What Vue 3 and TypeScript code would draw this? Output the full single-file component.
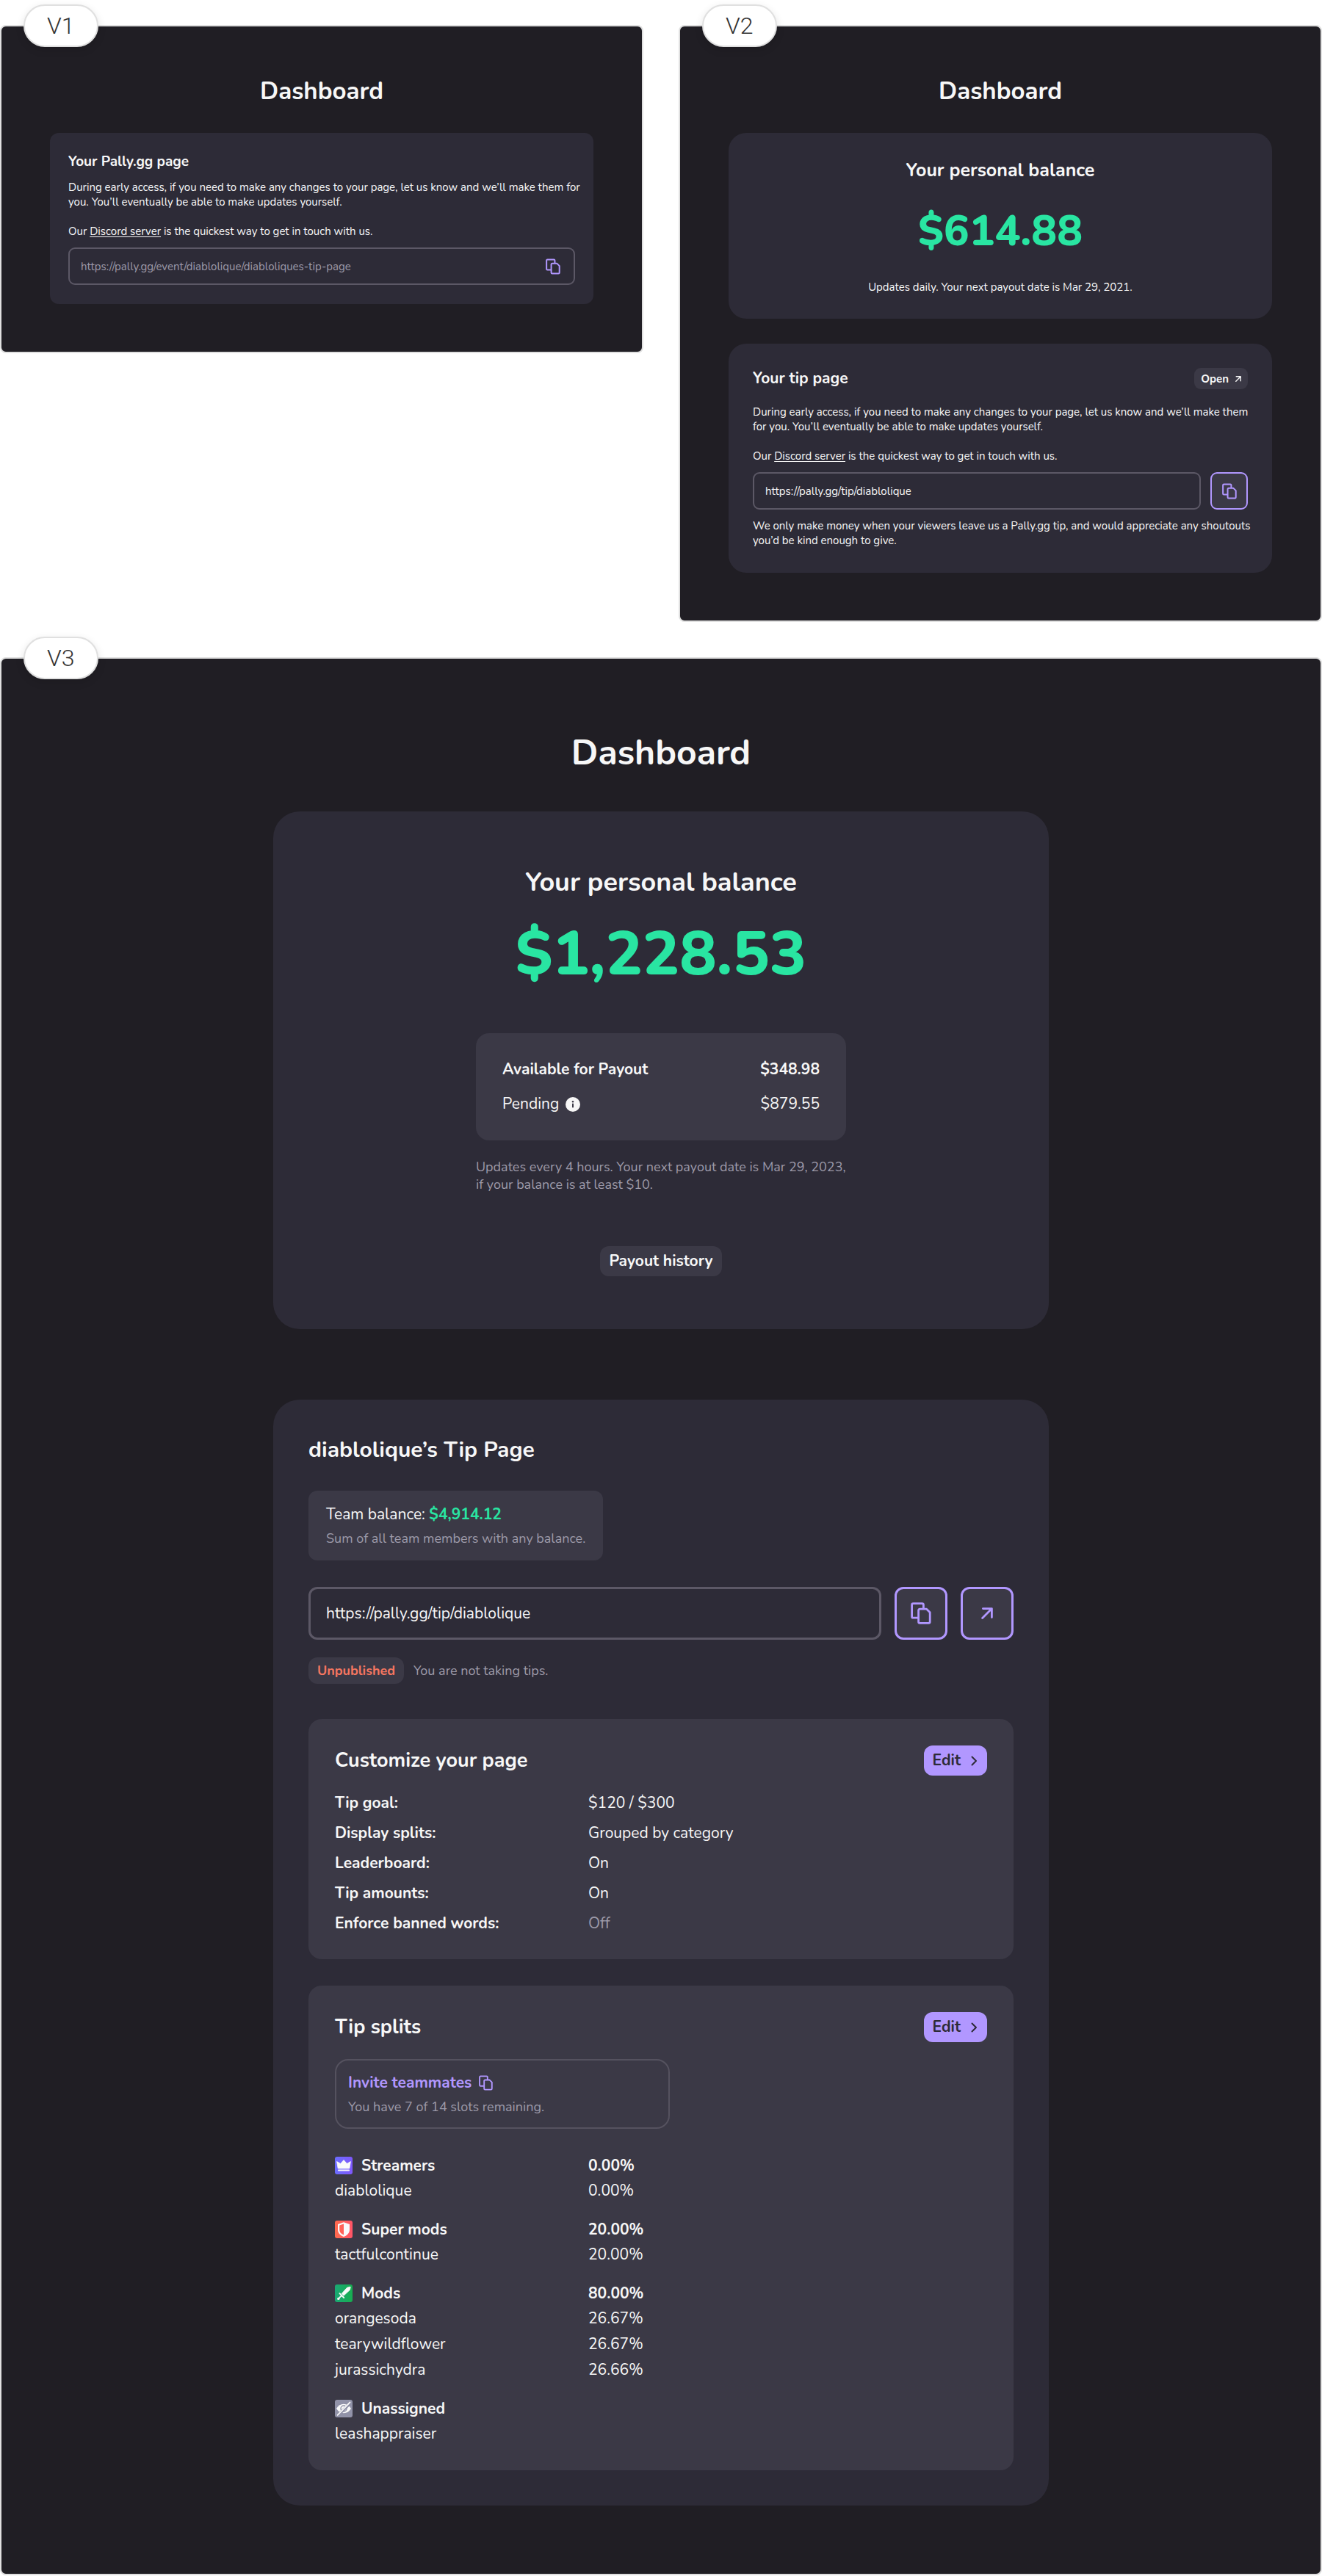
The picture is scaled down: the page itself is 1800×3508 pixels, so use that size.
<script setup lang="ts">
import { h, type FunctionalComponent } from 'vue'

interface Setting {
  label: string
  value: string
  off?: boolean
}

interface Member {
  name: string
  share?: string
}

interface Group {
  id: 'streamers' | 'super' | 'mods' | 'none'
  title: string
  total?: string
  members: Member[]
}

const settings: Setting[] = [
  { label: 'Tip goal:', value: '$120 / $300' },
  { label: 'Display splits:', value: 'Grouped by category' },
  { label: 'Leaderboard:', value: 'On' },
  { label: 'Tip amounts:', value: 'On' },
  { label: 'Enforce banned words:', value: 'Off', off: true },
]

const groups: Group[] = [
  { id: 'streamers', title: 'Streamers', total: '0.00%', members: [{ name: 'diablolique', share: '0.00%' }] },
  { id: 'super', title: 'Super mods', total: '20.00%', members: [{ name: 'tactfulcontinue', share: '20.00%' }] },
  {
    id: 'mods',
    title: 'Mods',
    total: '80.00%',
    members: [
      { name: 'orangesoda', share: '26.67%' },
      { name: 'tearywildflower', share: '26.67%' },
      { name: 'jurassichydra', share: '26.66%' },
    ],
  },
  { id: 'none', title: 'Unassigned', members: [{ name: 'leashappraiser' }] },
]

const tipUrl = 'https://pally.gg/tip/diablolique'
const eventUrl = 'https://pally.gg/event/diablolique/diabloliques-tip-page'

const strokeAttrs = {
  fill: 'none',
  stroke: 'currentColor',
  'stroke-linecap': 'round',
  'stroke-linejoin': 'round',
  'aria-hidden': 'true',
}

const CopyIcon: FunctionalComponent = () =>
  h('svg', { viewBox: '0 0 28 30', ...strokeAttrs, 'stroke-linecap': 'butt', 'stroke-width': 2.8 }, [
    h('path', { d: 'M10 21.2H3.4Q1.6 21.2 1.6 19.4V3.4Q1.6 1.6 3.4 1.6H15.6Q17.4 1.6 17.4 3.4V9' }),
    h('path', { d: 'M10.6 11Q10.6 9.2 12.4 9.2H21.6L26.2 13.8V26.6Q26.2 28.4 24.4 28.4H12.4Q10.6 28.4 10.6 26.6Z' }),
  ])

const ArrowIcon: FunctionalComponent = () =>
  h('svg', { viewBox: '0 0 16 16', ...strokeAttrs, 'stroke-width': 2.8 }, [
    h('path', { d: 'M2.4 1.6H14.4V13.6M14 2L1.6 14.4' }),
  ])

const ChevronIcon: FunctionalComponent = () =>
  h('svg', { viewBox: '0 0 18 18', ...strokeAttrs, 'stroke-width': 2 }, [
    h('path', { d: 'M6.5 3.5L12 9L6.5 14.5' }),
  ])
</script>

<template>
  <main class="board">
    <div class="row">
      <section class="panel" aria-label="V1">
        <span class="badge">V1</span>
        <h1>Dashboard</h1>
        <div class="card card-a">
          <h2>Your Pally.gg page</h2>
          <p class="copy">
            During early access, if you need to make any changes to your page, let us know and we’ll make them for<br />
            you. You’ll eventually be able to make updates yourself.<br /><br />
            Our <a href="#discord">Discord server</a> is the quickest way to get in touch with us.
          </p>
          <div class="field">
            <input type="text" readonly :value="eventUrl" aria-label="Your Pally.gg page" />
            <button type="button" class="bare" aria-label="Copy link"><CopyIcon class="copy-sm" /></button>
          </div>
        </div>
      </section>

      <section class="panel" aria-label="V2">
        <span class="badge">V2</span>
        <h1>Dashboard</h1>
        <div class="card balance-b">
          <h2>Your personal balance</h2>
          <p class="amount">$614.88</p>
          <p class="copy">Updates daily. Your next payout date is Mar 29, 2021.</p>
        </div>
        <div class="card tip-b">
          <header>
            <h2>Your tip page</h2>
            <a class="open" href="#open">Open <ArrowIcon class="arrow-sm" /></a>
          </header>
          <p class="copy">
            During early access, if you need to make any changes to your page, let us know and we’ll make them<br />
            for you. You’ll eventually be able to make updates yourself.<br /><br />
            Our <a href="#discord">Discord server</a> is the quickest way to get in touch with us.
          </p>
          <div class="link-row">
            <div class="field">
              <input type="text" readonly :value="tipUrl" aria-label="Your tip page" />
            </div>
            <button type="button" class="square" aria-label="Copy link"><CopyIcon class="copy-sm" /></button>
          </div>
          <p class="copy">
            We only make money when your viewers leave us a Pally.gg tip, and would appreciate any shoutouts<br />
            you’d be kind enough to give.
          </p>
        </div>
      </section>
    </div>

    <section class="panel large" aria-label="V3">
      <span class="badge">V3</span>
      <h1>Dashboard</h1>

      <div class="card balance-c">
        <h2>Your personal balance</h2>
        <p class="amount">$1,228.53</p>
        <dl class="payout">
          <div class="strong">
            <dt>Available for Payout</dt>
            <dd>$348.98</dd>
          </div>
          <div>
            <dt>
              Pending
              <svg class="info" viewBox="0 0 20 20" aria-hidden="true">
                <circle cx="10" cy="10" r="10" fill="#f7f7f7" />
                <circle cx="10" cy="6.2" r="1.2" fill="#3b3946" />
                <rect x="9" y="8.4" width="2" height="6.2" rx="1" fill="#3b3946" />
              </svg>
            </dt>
            <dd>$879.55</dd>
          </div>
        </dl>
        <p class="note">
          Updates every 4 hours. Your next payout date is Mar 29, 2023,<br />
          if your balance is at least $10.
        </p>
        <button type="button" class="history">Payout history</button>
      </div>

      <div class="card tip-c">
        <h2>diablolique’s Tip Page</h2>
        <div class="team">
          <p>Team balance: <strong>$4,914.12</strong></p>
          <p class="muted">Sum of all team members with any balance.</p>
        </div>
        <div class="link-row">
          <div class="field">
            <input type="text" readonly :value="tipUrl" aria-label="Tip page link" />
          </div>
          <button type="button" class="square" aria-label="Copy link"><CopyIcon class="copy-lg" /></button>
          <a class="square" href="#open" aria-label="Open tip page"><ArrowIcon class="arrow-lg" /></a>
        </div>
        <div class="status">
          <strong>Unpublished</strong>
          <span class="muted">You are not taking tips.</span>
        </div>

        <section class="block customize">
          <header>
            <h3>Customize your page</h3>
            <button type="button" class="edit">Edit <ChevronIcon class="chevron" /></button>
          </header>
          <table>
            <tbody>
              <tr v-for="s in settings" :key="s.label">
                <th scope="row">{{ s.label }}</th>
                <td :class="{ off: s.off }">{{ s.value }}</td>
              </tr>
            </tbody>
          </table>
        </section>

        <section class="block splits">
          <header>
            <h3>Tip splits</h3>
            <button type="button" class="edit">Edit <ChevronIcon class="chevron" /></button>
          </header>
          <div class="invite">
            <button type="button">Invite teammates <CopyIcon class="copy-xs" /></button>
            <p class="muted">You have 7 of 14 slots remaining.</p>
          </div>
          <table>
            <tbody v-for="g in groups" :key="g.id">
              <tr class="group">
                <th scope="row">
                  <div class="role">
                    <span class="chip" :class="g.id">
                      <svg viewBox="0 0 24 24" fill="#fafafa" aria-hidden="true">
                        <template v-if="g.id === 'streamers'">
                          <path d="M2.6 6.6L7.6 9.4L12 4.6L16.4 9.4L21.4 6.6L19.8 16H4.2Z" stroke="#fafafa" stroke-width="0.8" stroke-linejoin="round" />
                          <rect x="4" y="17.4" width="16" height="2.2" rx="0.8" />
                        </template>
                        <path
                          v-else-if="g.id === 'super'"
                          fill-rule="evenodd"
                          d="M12 2.2L20 5V12.4C20 16.8 16.6 20.2 12 22C7.4 20.2 4 16.8 4 12.4V5ZM12 4.6L6.2 6.6V12.4C6.2 15.6 8.4 18 12 19.6Z"
                        />
                        <template v-else-if="g.id === 'mods'">
                          <path d="M9.2 12.4L16.6 4.2L20.6 3.2Q21.4 3.2 21.2 4L20.2 7.6L12 15.2Z" stroke="#fafafa" stroke-width="0.8" stroke-linejoin="round" />
                          <path d="M6.4 12.2L12.2 18M9.4 14.8L5 19.2" fill="none" stroke="#fafafa" stroke-width="1.8" stroke-linecap="round" />
                          <circle cx="4.8" cy="19.4" r="1.7" />
                        </template>
                        <template v-else>
                          <path d="M2 12Q6 5.8 12 5.8T22 12Q18 18.2 12 18.2T2 12Z" />
                          <circle cx="12" cy="12" r="4" fill="none" stroke="#9192a8" stroke-width="1.4" />
                          <path d="M3.8 21.6L21.6 3.8" stroke="#9192a8" stroke-width="4" />
                          <path d="M3.6 20.8L20.6 3.4" stroke="#fafafa" stroke-width="1.7" stroke-linecap="round" />
                        </template>
                      </svg>
                    </span>
                    {{ g.title }}
                  </div>
                </th>
                <td>{{ g.total }}</td>
              </tr>
              <tr v-for="m in g.members" :key="m.name">
                <td>{{ m.name }}</td>
                <td>{{ m.share }}</td>
              </tr>
            </tbody>
          </table>
        </section>
      </div>
    </section>
  </main>
</template>

<style>
body {
  margin: 0;
  background: #fff;
}
</style>

<style scoped>
.board {
  --ink: #f7f7f7;
  --soft: #9d9aa9;
  --card: #2d2b37;
  --raised: #3b3946;
  --line: #5c5866;
  --accent: #b197ff;
  --money: #29e5a2;
  display: flex;
  flex-direction: column;
  gap: 48px;
  padding-top: 34px;
  color: var(--ink);
  font: 400 15px/20px Nunito, Lato, 'Open Sans', sans-serif;
}
.board * {
  box-sizing: border-box;
}
h1,
h2,
h3,
p,
dl,
dd {
  margin: 0;
}
h1,
h2,
h3 {
  font-weight: 700;
}
button,
input {
  margin: 0;
  padding: 0;
  border: 0;
  background: none;
  color: inherit;
  font: inherit;
}
svg {
  display: block;
  flex: none;
}
.row {
  display: grid;
  grid-template-columns: repeat(2, minmax(0, 1fr));
  align-items: start;
  gap: 48px;
}
.panel {
  position: relative;
  padding: 67px 66px 65px;
  border: 2px solid #e0e0e0;
  border-radius: 8px;
  background: #201e24;
}
.badge {
  position: absolute;
  top: -30px;
  left: 30px;
  padding: 0 30px;
  border: 2px solid #e0e0e0;
  border-radius: 29px;
  background: #fff;
  box-shadow: 0 4px 12px rgba(0, 0, 0, 0.12);
  color: #333;
  font: 300 32px/54px Roboto, sans-serif;
}
.panel > h1 {
  margin-bottom: 34px;
  font-size: 33px;
  line-height: 44px;
  text-align: center;
}
.card {
  border-radius: 24px;
  background: var(--card);
}
.copy {
  white-space: nowrap;
}
.copy a {
  color: inherit;
  text-underline-offset: 2px;
}
.field {
  display: flex;
  flex: 1;
  align-items: center;
  height: 51px;
  padding: 0 18px 0 15px;
  border: 2px solid var(--line);
  border-radius: 9px;
}
.field input {
  flex: 1;
  min-width: 0;
  outline: none;
}
.square {
  display: flex;
  flex: none;
  align-items: center;
  justify-content: center;
  width: 51px;
  height: 51px;
  border: 2px solid var(--accent);
  border-radius: 9px;
  background: var(--raised);
  color: var(--accent);
}
.copy-sm {
  width: 20px;
  height: 22px;
}
.copy-xs {
  width: 19px;
  height: 21px;
}
.copy-lg {
  width: 28px;
  height: 30px;
}
.arrow-sm {
  width: 8px;
  height: 8px;
}
.arrow-lg {
  width: 16px;
  height: 16px;
}
.chevron {
  width: 18px;
  height: 18px;
}
.link-row {
  display: flex;
  gap: 13px;
}
.muted {
  color: var(--soft);
  font-size: 18px;
  line-height: 24px;
}

/* V1 */
.card-a {
  padding: 26px 25px;
  border-radius: 12px;
}
.card-a h2 {
  margin-bottom: 12px;
  font-size: 19px;
  line-height: 26px;
}
.card-a .field {
  margin-top: 12px;
  color: var(--soft);
}
.bare {
  color: var(--accent);
}

/* V2 */
.balance-b {
  margin-bottom: 34px;
  padding: 34px 33px 33px;
  text-align: center;
}
.balance-b h2 {
  font-size: 25px;
  line-height: 34px;
}
.amount {
  color: var(--money);
  font-weight: 800;
}
.balance-b .amount {
  margin: 26px 0;
  font-size: 58px;
  line-height: 80px;
}
.tip-b {
  padding: 33px 33px 34px;
}
header {
  display: flex;
  align-items: center;
  justify-content: space-between;
}
.tip-b header {
  margin-bottom: 21px;
}
.tip-b h2 {
  font-size: 21px;
  line-height: 29px;
}
.open {
  display: flex;
  align-items: center;
  gap: 9px;
  height: 29px;
  padding: 0 9px;
  border-radius: 9px;
  background: var(--raised);
  color: inherit;
  font-weight: 700;
  text-decoration: none;
}
.tip-b .link-row {
  margin: 12px 0;
}

/* V3 */
.large {
  padding: 95px 66px 93px;
  font-size: 21px;
  line-height: 29px;
}
.large > h1 {
  margin-bottom: 47px;
  font-size: 48px;
  line-height: 66px;
}
.large > .card {
  max-width: 1056px;
  margin: 0 auto;
  border-radius: 36px;
}
.balance-c {
  display: flex;
  flex-direction: column;
  align-items: center;
  padding: 72px 48px;
}
.balance-c h2 {
  font-size: 36px;
  line-height: 50px;
}
.balance-c .amount {
  margin: 16px 0 50px;
  font-size: 84px;
  line-height: 114px;
}
.payout {
  display: flex;
  flex-direction: column;
  gap: 18px;
  width: 504px;
  padding: 35px 36px;
  border-radius: 18px;
  background: var(--raised);
}
.payout > div {
  display: flex;
  justify-content: space-between;
}
.payout dt {
  display: flex;
  align-items: center;
  gap: 9px;
}
.strong {
  font-weight: 700;
}
.info {
  width: 20px;
  height: 20px;
}
.note {
  width: 504px;
  margin: 24px 0 72px;
  color: var(--soft);
  font-size: 18px;
  line-height: 24px;
  white-space: nowrap;
}
.history {
  height: 41px;
  padding: 0 12px;
  border-radius: 12px;
  background: var(--raised);
  font-weight: 700;
}
.large > .tip-c {
  margin-top: 96px;
  padding: 48px;
}
.tip-c h2 {
  font-size: 30px;
  line-height: 41px;
}
.team {
  display: flex;
  flex-direction: column;
  gap: 6px;
  width: fit-content;
  margin: 35px 0 36px;
  padding: 18px 24px;
  border-radius: 12px;
  background: var(--raised);
}
.team strong {
  color: var(--money);
  font-weight: 700;
}
.tip-c .link-row {
  gap: 18px;
}
.tip-c .field {
  height: 72px;
  padding: 0 21px;
  border-width: 3px;
  border-radius: 12px;
}
.tip-c .square {
  width: 72px;
  height: 72px;
  border-width: 3px;
  border-radius: 12px;
}
.status {
  display: flex;
  align-items: center;
  gap: 13px;
  margin-top: 24px;
}
.status strong {
  padding: 0 12px;
  border-radius: 12px;
  background: var(--raised);
  color: #f67660;
  font-size: 18px;
  line-height: 36px;
}
.block {
  border-radius: 18px;
  background: var(--raised);
}
.customize {
  margin: 48px 0 36px;
  padding: 36px 36px 28px;
}
.splits {
  padding: 36px 36px 32px;
}
h3 {
  font-size: 27px;
  line-height: 41px;
}
.edit {
  display: flex;
  align-items: center;
  gap: 9px;
  height: 41px;
  padding: 0 9px 0 12px;
  border-radius: 12px;
  background: var(--accent);
  color: var(--card);
  font-weight: 700;
}
table {
  width: 100%;
  border-collapse: collapse;
  table-layout: fixed;
}
th,
td {
  height: 35px;
  padding: 0;
  text-align: left;
}
th:first-child,
td:first-child {
  width: 345px;
}
.customize table {
  margin-top: 17px;
}
.customize th,
.customize td {
  height: 41px;
}
.off {
  color: var(--soft);
}
.invite {
  display: flex;
  flex-direction: column;
  gap: 6px;
  max-width: 456px;
  margin: 23px 0 33px;
  padding: 16px;
  border: 2px solid #55525f;
  border-radius: 18px;
}
.invite button {
  display: flex;
  align-items: center;
  align-self: flex-start;
  gap: 10px;
  color: var(--accent);
  font-weight: 700;
}
.group th,
.group td {
  height: 34px;
  font-weight: 700;
}
tbody + tbody .group th,
tbody + tbody .group td {
  height: 52px;
  padding-top: 18px;
}
.role {
  display: flex;
  align-items: center;
  gap: 12px;
}
.chip {
  width: 24px;
  height: 24px;
  border-radius: 3px;
}
.streamers {
  background: linear-gradient(90deg, #6b6dff, #7f58fb);
}
.super {
  background: linear-gradient(90deg, #ff6a4d, #ff5468);
}
.mods {
  background: linear-gradient(90deg, #1aa974, #17ad50);
}
.none {
  background: #9192a8;
}
</style>
